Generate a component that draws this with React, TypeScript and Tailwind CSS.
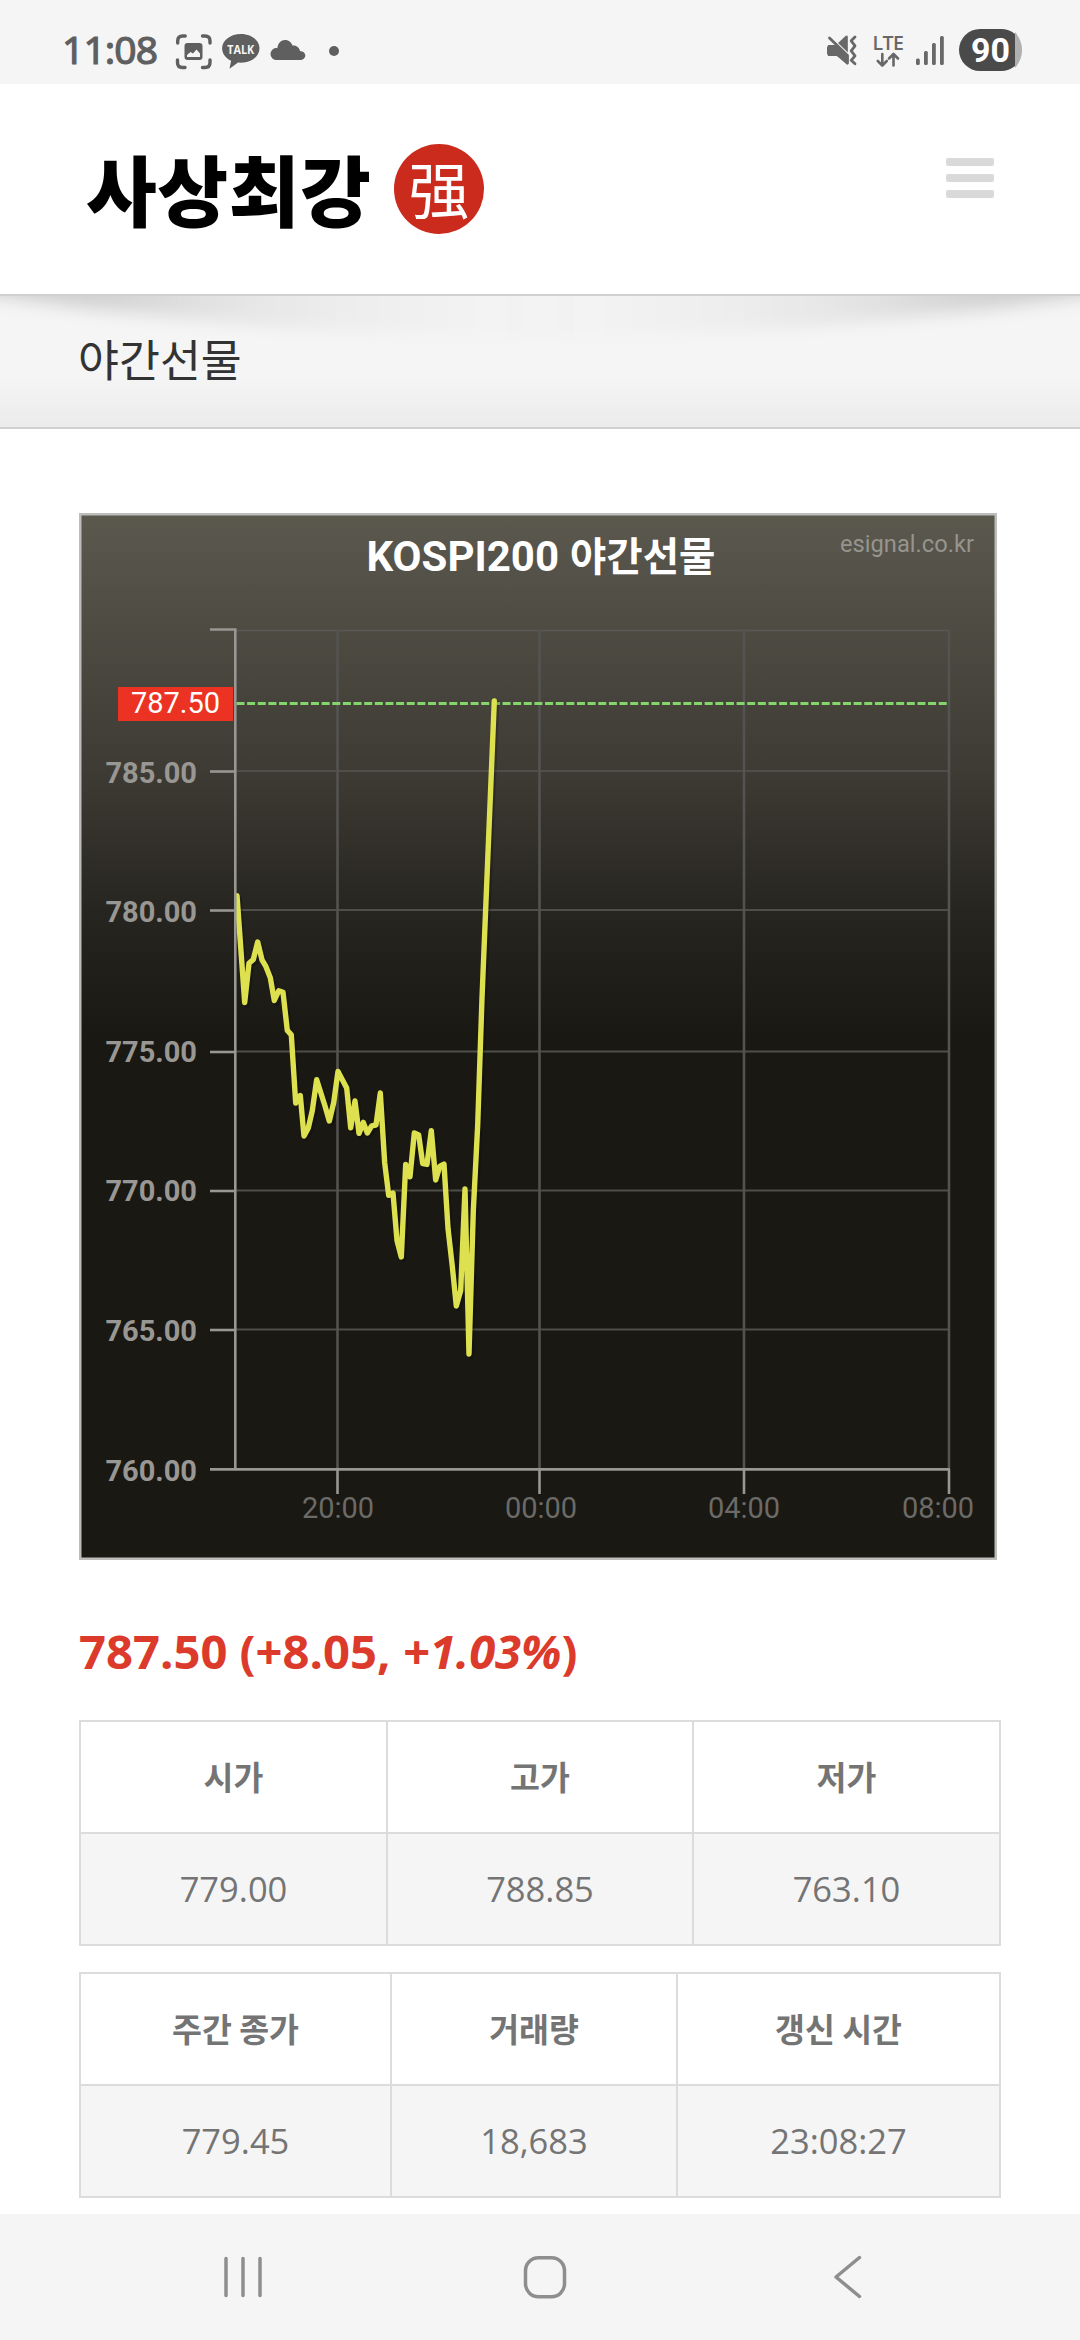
import type { FC, ReactElement } from 'react';
import React from 'react';

interface ITableProps {
  columns: string;
  heads: string[];
  values: string[];
}

const priceTicks = [
  { label: '785.00', y: 771, labelY: 782.5 },
  { label: '780.00', y: 910, labelY: 922 },
  { label: '775.00', y: 1051.5, labelY: 1061.5 },
  { label: '770.00', y: 1190.5, labelY: 1200.5 },
  { label: '765.00', y: 1329.5, labelY: 1341 },
];

const timeTicks = [
  { label: '20:00', x: 337.5, labelX: 338 },
  { label: '00:00', x: 539.5, labelX: 541 },
  { label: '04:00', x: 744, labelX: 744 },
  { label: '08:00', x: 949, labelX: 938 },
];

const series =
  '237,895.8 244.7,1002.5 249,963.3 253.3,959.5 257.7,942 262,959.8 266,966.7 270.3,977.7 274.3,1000.5 278.7,990.8 283,992.2 287.3,1030.4 291.3,1034.9 295.7,1103 300.3,1095.5 304,1136 308.3,1127.9 312.3,1110.7 316.7,1079.7 325,1106 329.3,1121 333.7,1102.7 338,1071.4 346.7,1088 350.7,1127.9 355,1101 359,1133.4 363.3,1122.4 367.3,1133 371.7,1125.8 376,1125 380.3,1093 384.7,1163 388.7,1195.3 393,1193 397,1240.5 401.3,1257 405.7,1164.4 410,1176.8 414.3,1133 418.7,1135 422.7,1163.7 427,1164.4 431.3,1130.6 435.7,1180 439.7,1166.4 444,1164 448,1228.4 452.3,1266.3 456.3,1306 460.7,1290.4 465,1189 469,1354 473.3,1211 477.7,1125 482,998 487.7,860 494.3,701';

const StatusBar: FC = (): ReactElement => (
  <div className="flex h-[84px] shrink-0 justify-between bg-[#f5f5f5]">
    <svg width="380" height="84" viewBox="0 0 380 84" fill="#5f5f5f">
      <text
        x="62"
        y="64"
        fontSize="39"
        textLength="96"
        stroke="#5f5f5f"
        strokeWidth="1.100"
        fontFamily="'Noto Sans', 'Open Sans', sans-serif"
      >
        11:08
      </text>
      <g fill="none" stroke="#5f5f5f" strokeWidth="3.400" strokeLinecap="round">
        <path d="M177.700 43v-2q0-5 5-5h2.500M202.500 36h2.500q5 0 5 5v2M210 60v2.500q0 5-5 5h-2.500M185 67.500h-2.500q-5 0-5-5V60" />
      </g>
      <path
        fillRule="evenodd"
        d="M187.500 43h12q3 0 3 3v11q0 3-3 3h-12q-3 0-3-3V46q0-3 3-3zM187 57h13v-3.500l-3.500-4-3.500 4-2.500-1.500-3.500 3z"
      />
      <path d="M241 34c10.500 0 18.500 6.300 18.500 14.300S251.500 62.800 241 62.800l-3-.2-8.500 6.200 1.600-8c-5.500-2.600-9-7.100-9-12.500C222.100 40.300 230.500 34 241 34z" />
      <text
        x="240.700"
        y="54"
        fill="#f5f5f5"
        fontSize="12.500"
        fontWeight="700"
        textAnchor="middle"
        textLength="27"
        lengthAdjust="spacingAndGlyphs"
        fontFamily="'Open Sans', sans-serif"
      >
        TALK
      </text>
      <path d="M276 60a6 6 0 0 1-.5-11.900c.6-.1 1.200-.1 1.800.1C278 43 281 40 285 40c4 0 6.500 2.500 7.500 5.500 4-.6 7 2.200 7.500 5.500 3 .2 5.300 1.800 5.300 4.500S303 60 300 60z" />
      <circle cx="334" cy="51" r="5" />
    </svg>
    <svg width="280" height="84" viewBox="800 0 280 84" fill="#686868">
      <path d="M830 45h6l12 18.500q0 1.500-1.500.8L837 56h-7q-3 0-3-3v-5q0-3 3-3z" />
      <path d="M837 44l8-7.500q2.500-2 2.800.5V53z" />
      <path d="M829 38l19 18.500" stroke="#f5f5f5" strokeWidth="5.500" />
      <path d="M828 45h8l12 12v7l-11-8h-9z" />
      <path
        d="M829.500 38l18 17.500V63M855 37l-3.800 3.800 3.800 5-3.800 5 3.800 5-3.800 4.500 3.800 3.500"
        fill="none"
        stroke="#686868"
        strokeWidth="2.800"
        strokeLinecap="round"
        strokeLinejoin="round"
      />
      <text
        x="872.500"
        y="50"
        fontSize="19.500"
        fontWeight="600"
        textLength="31.500"
        fontFamily="'Open Sans', sans-serif"
      >
        LTE
      </text>
      <path
        d="M882.300 54v11.300M877.800 61l4.500 4.500 4.500-4.500M893.500 65.500V54M889 58.500l4.500-4.500 4.500 4.500"
        fill="none"
        stroke="#686868"
        strokeWidth="2.600"
        strokeLinecap="round"
        strokeLinejoin="round"
      />
      <rect x="916" y="58.500" width="3.800" height="6.500" rx="1.500" />
      <rect x="924" y="51" width="3.800" height="14" rx="1.500" />
      <rect x="932" y="43" width="3.800" height="22" rx="1.500" />
      <rect x="940" y="36" width="3.800" height="29" rx="1.500" />
      <path d="M1015 32q7 8 7 18t-7 18z" fill="#b0b0b0" />
      <path
        d="M980 29h21q8 0 14 5v32q-6 5-14 5h-21a21 21 0 0 1 0-42z"
        fill="#4a4a4a"
      />
      <text
        x="971"
        y="62"
        fill="#fff"
        fontSize="33"
        fontWeight="700"
        textLength="39"
        lengthAdjust="spacingAndGlyphs"
        fontFamily="Roboto, 'Open Sans', sans-serif"
      >
        90
      </text>
    </svg>
  </div>
);

const Header: FC = (): ReactElement => (
  <header className="flex h-[212px] shrink-0 items-start justify-between border-b-2 border-[#d0d0d0] px-[86px]">
    <div className="flex items-start gap-[21px] pt-[59px]">
      <h1 className="w-[287px] font-['Noto_Sans_CJK_KR',sans-serif] text-[77px] leading-[90px] font-black tracking-[0.5px] whitespace-nowrap text-black">
        사상최강
      </h1>
      <div className="mt-px flex size-[90px] items-center justify-center rounded-full bg-[#cb2b1d] pb-1 font-['Noto_Sans_CJK_SC',sans-serif] text-[61px] leading-none text-white">
        强
      </div>
    </div>
    <button type="button" className="mt-[74px] flex w-[48px] flex-col gap-2">
      <span className="h-2 w-full rounded-[2px] bg-[#d9d9d9]" />
      <span className="h-2 w-full rounded-[2px] bg-[#d9d9d9]" />
      <span className="h-2 w-full rounded-[2px] bg-[#d9d9d9]" />
    </button>
  </header>
);

const TitleBar: FC = (): ReactElement => (
  <div className="relative flex h-[133px] shrink-0 items-center overflow-hidden border-b-2 border-[#d0d0d0] bg-linear-to-b from-[#f5f5f5] from-60% to-[#ebebeb] pb-[7px] pl-[78px]">
    <svg
      className="absolute inset-0"
      width="1080"
      height="131"
      viewBox="0 0 1080 131"
    >
      <defs>
        <filter id="soft" x="-20%" y="-100%" width="140%" height="300%">
          <feGaussianBlur stdDeviation="20 8" />
        </filter>
        <linearGradient id="fade">
          <stop offset="0" stopColor="#000" stopOpacity=".18" />
          <stop offset=".25" stopColor="#000" stopOpacity=".14" />
          <stop offset=".4" stopColor="#000" stopOpacity=".08" />
          <stop offset=".58" stopColor="#000" stopOpacity=".035" />
          <stop offset=".8" stopColor="#000" stopOpacity=".01" />
          <stop offset="1" stopColor="#000" stopOpacity="0" />
        </linearGradient>
        <path
          id="bend"
          d="M-60-40V-6L0 0 80 12 200 24 320 34 600 46V-40z"
          fill="url(#fade)"
          filter="url(#soft)"
        />
      </defs>
      <use href="#bend" />
      <use href="#bend" transform="matrix(-1 0 0 1 1080 0)" />
    </svg>
    <h2 className="relative font-['Noto_Sans_CJK_KR',sans-serif] text-[44.500px] leading-none text-[#333]">
      야간선물
    </h2>
  </div>
);

const Chart: FC = (): ReactElement => (
  <svg
    className="block shrink-0"
    width="918"
    height="1047"
    viewBox="79 513 918 1047"
    fontFamily="Roboto, 'Noto Sans CJK KR', sans-serif"
    fontSize="29"
  >
    <defs>
      <linearGradient id="panel" x1="0" y1="0" x2="0" y2="1">
        <stop offset="0" stopColor="#5b584e" />
        <stop offset=".1" stopColor="#4f4c44" />
        <stop offset=".245" stopColor="#3e3b34" />
        <stop offset=".38" stopColor="#272520" />
        <stop offset=".5" stopColor="#191813" />
        <stop offset="1" stopColor="#191813" />
      </linearGradient>
    </defs>
    <rect x="79" y="513" width="918" height="1047" fill="#bdbdbb" />
    <rect x="81.500" y="515.500" width="913" height="1042" fill="url(#panel)" />
    <text x="366.500" y="571" fill="#fff" fontSize="42" fontWeight="700">
      KOSPI200
      <tspan x="570" fontSize="39.500">
        야간선물
      </tspan>
    </text>
    <text x="974" y="552" fill="#96948e" fontSize="23.700" textAnchor="end">
      esignal.co.kr
    </text>

    <path d="M235 630.500h715" stroke="#5a5852" strokeWidth="1.500" />
    {priceTicks.map((tick) => (
      <g key={tick.label}>
        <path d={`M235 ${tick.y}h715`} stroke="#4f4e4b" strokeWidth="1.800" />
        <path
          d={`M210 ${tick.y + 0.5}h25`}
          stroke="#999793"
          strokeWidth="2.600"
        />
        <text
          x="197"
          y={tick.labelY}
          fill="#999793"
          fontWeight="700"
          textAnchor="end"
        >
          {tick.label}
        </text>
      </g>
    ))}
    <text x="197" y="1480.500" fill="#999793" fontWeight="700" textAnchor="end">
      760.00
    </text>
    {timeTicks.map((tick) => (
      <g key={tick.label}>
        <path d={`M${tick.x} 630v838`} stroke="#535351" strokeWidth="2.600" />
        <path d={`M${tick.x} 1469v25`} stroke="#999793" strokeWidth="2.600" />
        <text x={tick.labelX} y="1518" fill="#6b6a67" textAnchor="middle">
          {tick.label}
        </text>
      </g>
    ))}

    <path
      d="M236.500 703.500h712"
      stroke="#84d56c"
      strokeWidth="2.800"
      strokeDasharray="8 2.640"
    />
    <g fill="none" strokeLinecap="round" strokeLinejoin="round">
      <polyline
        points={series}
        transform="translate(2 2)"
        stroke="#000"
        strokeOpacity=".2"
        strokeWidth="6"
      />
      <polyline points={series} stroke="#dde04f" strokeWidth="5.400" />
    </g>
    <path
      d="M210 629.500h25.300V1469"
      fill="none"
      stroke="#999793"
      strokeWidth="2.600"
    />
    <path d="M210 1469.300h740" stroke="#999793" strokeWidth="2.800" />
    <rect x="118" y="687" width="115" height="34" fill="#ec3323" />
    <text x="175.500" y="713" fill="#fff" textAnchor="middle">
      787.50
    </text>
  </svg>
);

const Table: FC<ITableProps> = ({ columns, heads, values }): ReactElement => (
  <div
    className={`grid w-[922px] shrink-0 border-t-2 border-l-2 border-[#dcdcdc] text-center text-[#747474] ${columns}`}
  >
    {heads.map((head) => (
      <div
        key={head}
        className="h-[112px] border-r-2 border-b-2 border-[#dcdcdc] font-['Noto_Sans_CJK_KR',sans-serif] text-[32.500px] leading-[107px] font-bold"
      >
        {head}
      </div>
    ))}
    {values.map((value) => (
      <div
        key={value}
        className="h-[112px] border-r-2 border-b-2 border-[#dcdcdc] bg-[#f5f5f5] font-['Open_Sans',sans-serif] text-[34.500px] leading-[109px]"
      >
        {value}
      </div>
    ))}
  </div>
);

const NavBar: FC = (): ReactElement => (
  <nav className="mt-auto h-[126px] shrink-0 bg-[#f5f5f5]">
    <svg
      width="1080"
      height="126"
      viewBox="0 0 1080 126"
      fill="none"
      stroke="#8e8e8e"
      strokeWidth="3.500"
      strokeLinecap="round"
      strokeLinejoin="round"
    >
      <path d="M226 44.500v37M243 44.500v37M260 44.500v37" />
      <rect x="525.500" y="43.700" width="39" height="39" rx="13" />
      <path d="M859.500 43.500L836 63l23.500 19.500" />
    </svg>
  </nav>
);

const App: FC = (): ReactElement => {
  return (
    <div className="flex h-[2340px] w-[1080px] flex-col overflow-hidden bg-white">
      <StatusBar />
      <Header />
      <TitleBar />
      <main className="flex flex-col pt-[84px] pl-[79px]">
        <Chart />
        <p className="mt-[59px] mb-[37px] font-['Open_Sans',sans-serif] text-[47.200px] leading-[64px] font-bold whitespace-nowrap text-[#dc3a2b]">
          787.50 (+8.05, <em>+1.03%</em>)
        </p>
        <Table
          columns="grid-cols-[307px_306px_307px]"
          heads={['시가', '고가', '저가']}
          values={['779.00', '788.85', '763.10']}
        />
        <div className="h-[26px]" />
        <Table
          columns="grid-cols-[311px_286px_323px]"
          heads={['주간 종가', '거래량', '갱신 시간']}
          values={['779.45', '18,683', '23:08:27']}
        />
      </main>
      <NavBar />
    </div>
  );
};

export default App;
